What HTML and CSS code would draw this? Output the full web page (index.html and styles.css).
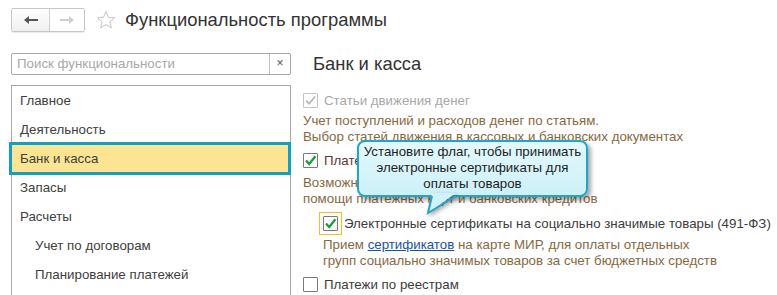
FILE: index.html
```html
<!DOCTYPE html>
<html lang="ru">
<head>
  <meta charset="UTF-8">
  <meta name="viewport" content="width=device-width, initial-scale=1.0">
  <title>Функциональность программы</title>
  <link rel="stylesheet" href="styles.css">
</head>
<body>
  <div class="top">
    <div class="nav">
      <span class="nav-btn back">
        <svg width="16" height="10" viewBox="0 0 16 10"><path d="M1 5 L6 1 L6 4 L15 4 L15 6 L6 6 L6 9 Z" fill="#555"/></svg>
      </span>
      <span class="nav-btn fwd">
        <svg width="16" height="10" viewBox="0 0 16 10"><path d="M15 5 L10 1 L10 4 L1 4 L1 6 L10 6 L10 9 Z" fill="#cfcfcf"/></svg>
      </span>
    </div>
    <svg class="star" width="20" height="20" viewBox="0 0 20 20">
      <path d="M10 1.5 L12.5 7.3 L18.6 7.8 L13.9 11.8 L15.4 17.9 L10 14.6 L4.6 17.9 L6.1 11.8 L1.4 7.8 L7.5 7.3 Z" fill="none" stroke="#c4c4c4" stroke-width="1"/>
    </svg>
    <h1 class="title">Функциональность программы</h1>
  </div>

  <div class="main">
    <div class="side">
      <div class="search">
        <span class="search-text">Поиск функциональности</span>
        <span class="search-clear">×</span>
      </div>
      <ul class="sections">
        <li>Главное</li>
        <li>Деятельность</li>
        <li class="selected">Банк и касса</li>
        <li>Запасы</li>
        <li>Расчеты</li>
        <li class="sub">Учет по договорам</li>
        <li class="sub">Планирование платежей</li>
      </ul>
    </div>

    <div class="content">
      <h2 class="heading">Банк и касса</h2>

      <div class="option disabled row1">
        <span class="check on">
          <svg width="13" height="13" viewBox="0 0 13 13"><path d="M2.2 6.6 L5.2 9.8 L11 2.6" fill="none" stroke="#b4b4b4" stroke-width="1.6"/></svg>
        </span>
        <span class="label">Статьи движения денег</span>
      </div>
      <div class="desc d1">Учет поступлений и расходов денег по статьям.<br>Выбор статей движения в кассовых и банковских документах</div>

      <div class="option row2">
        <span class="check on">
          <svg width="13" height="13" viewBox="0 0 13 13"><path d="M2 6.4 L5.2 10 L11.4 2.2" fill="none" stroke="#1c9a3a" stroke-width="2.2"/></svg>
        </span>
        <span class="label dark">Платежные карты и банковские кредиты</span>
      </div>
      <div class="desc d2">Возможность расчетов с покупателями при<br>помощи платежных карт и банковских кредитов</div>

      <div class="option row3">
        <span class="focus">
          <span class="check on">
            <svg width="13" height="13" viewBox="0 0 13 13"><path d="M2 6.4 L5.2 10 L11.4 2.2" fill="none" stroke="#1c9a3a" stroke-width="2.2"/></svg>
          </span>
        </span>
        <span class="label">Электронные сертификаты на социально значимые товары (491-ФЗ)</span>
      </div>
      <div class="desc d3">Прием <a href="#">сертификатов</a> на карте МИР, для оплаты отдельных<br>групп социально значимых товаров за счет бюджетных средств</div>

      <div class="option row4">
        <span class="check"></span>
        <span class="label">Платежи по реестрам</span>
      </div>
    </div>
  </div>

  <div class="tip">
    <div class="tip-box">Установите флаг, чтобы принимать<br>электронные сертификаты для<br>оплаты товаров</div>
    <svg class="tip-tail" width="40" height="26" viewBox="0 0 40 26">
      <polygon points="10,0 6,20 34,0" fill="#d0f2fa"/>
      <polyline points="10,3 6,20 34,3" fill="none" stroke="#1fa6c9" stroke-width="2"/>
    </svg>
  </div>
</body>
</html>
```

FILE: styles.css
```css
html, body {
  height: 295px;
  overflow: hidden;
}
body {
  margin: 0;
  font-family: "Liberation Sans", Arial, sans-serif;
  font-size: 13.3px;
  color: #404040;
  background: white;
  position: relative;
}
.top {
  display: flex;
  align-items: center;
  height: 24px;
  padding: 8px 0 0 11px;
}
.nav {
  display: flex;
  height: 22px;
  border: 1px solid #c6c6c6;
  border-radius: 2px;
  box-shadow: 0 1px 1px rgba(0,0,0,0.08);
}
.nav-btn {
  display: flex;
  align-items: center;
  justify-content: center;
}
.nav-btn.back {
  width: 37px;
  border-right: 1px solid #d0d0d0;
  background: linear-gradient(#ffffff, #efefef);
}
.nav-btn.fwd {
  width: 34px;
  background: #fff;
}
.star {
  margin-left: 11px;
}
.title {
  margin: 0 0 0 9px;
  font-size: 18.4px;
  font-weight: normal;
  color: #333;
  line-height: 24px;
}
.main {
  display: flex;
  padding: 21px 0 0 11px;
  gap: 12px;
}
.side {
  width: 280px;
}
.search {
  display: flex;
  height: 20px;
  border: 1px solid #a9a9a9;
  border-radius: 2px;
}
.search-text {
  flex: 1;
  padding-left: 5px;
  line-height: 20px;
  color: #a8a8a8;
}
.search-clear {
  width: 20px;
  border-left: 1px solid #c2c2c2;
  text-align: center;
  line-height: 19px;
  font-size: 12px;
  color: #555;
}
.sections {
  list-style: none;
  margin: 10px 0 0;
  padding: 0;
  height: 210px;
  border: 1px solid #a9a9a9;
  border-bottom: none;
}
.sections li {
  height: 29px;
  line-height: 29px;
  padding-left: 8px;
  color: #404040;
}
.sections li.sub {
  padding-left: 23px;
}
.sections li.selected {
  height: 27px;
  line-height: 27px;
  margin: -2px -1px -2px -3px;
  padding-left: 8px;
  border: 3px solid #149fc1;
  background: #fbe492;
  position: relative;
}
.content {
  flex: 1;
}
.heading {
  margin: 0;
  padding-left: 10px;
  font-size: 18.4px;
  font-weight: normal;
  line-height: 22px;
  color: #333;
}
.option {
  display: flex;
  align-items: center;
  height: 17px;
}
.check {
  display: flex;
  align-items: center;
  justify-content: center;
  width: 13px;
  height: 13px;
  border: 1px solid #7a7a7a;
  border-radius: 1px;
  background: #fff;
  flex: none;
}
.label {
  margin-left: 6px;
  color: #3c3c3c;
  white-space: nowrap;
}
.label.dark {
  color: #5b3838;
}
.disabled .check {
  border-color: #c4c4c4;
}
.disabled .label {
  color: #a8a8a8;
}
.desc {
  line-height: 16px;
  color: #86693f;
  white-space: nowrap;
}
.desc a {
  color: #1a4fa6;
}
.row1 { margin-top: 17px; }
.d1 { margin-top: 4px; }
.row2 { margin-top: 7px; }
.d2 { margin-top: 6px; }
.row3 {
  margin-top: 5px;
  padding-left: 16px;
  height: 22px;
}
.focus {
  display: flex;
  padding: 3px;
  border: 1px solid #f1c31a;
}
.row3 .label {
  margin-left: 2px;
}
.d3 {
  margin-top: 3px;
  padding-left: 20px;
}
.row4 { margin-top: 7px; }

.tip {
  position: absolute;
  left: 357px;
  top: 140px;
}
.tip-box {
  width: 227px;
  height: 51px;
  padding-top: 2px;
  border: 2px solid #1fa6c9;
  border-radius: 8px;
  background: linear-gradient(#e3f9fd, #cdf0f9);
  box-shadow: 3px 3px 4px rgba(0,0,0,0.35);
  text-align: center;
  line-height: 16px;
  color: #1e1e1e;
  box-sizing: content-box;
}
.tip-tail {
  position: absolute;
  left: 65px;
  top: 53px;
  filter: drop-shadow(2px 2px 2px rgba(0,0,0,0.35));
}
```
